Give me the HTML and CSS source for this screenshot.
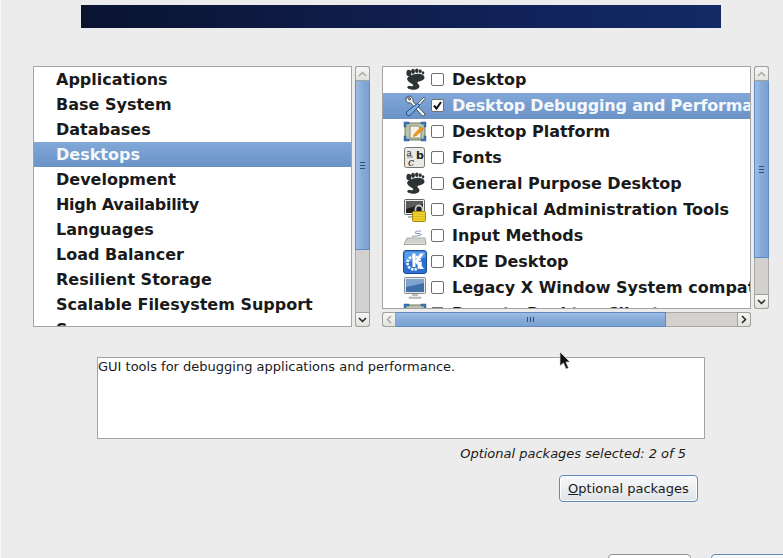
FILE: index.html
```html
<!DOCTYPE html>
<html lang="en">
<head>
<meta charset="utf-8">
<title>Package selection</title>
<link rel="stylesheet" href="styles.css">
</head>
<body>
<svg class="defs" width="0" height="0">
  <defs>
    <symbol id="foot" viewBox="0 0 24 24">
      <ellipse cx="5.800" cy="5" rx="2.400" ry="3.200" fill="#2e3436"/>
      <ellipse cx="10" cy="3.300" rx="2" ry="2.600" fill="#2e3436"/>
      <ellipse cx="13.800" cy="2.800" rx="1.700" ry="2.200" fill="#2e3436"/>
      <ellipse cx="17.200" cy="3.200" rx="1.500" ry="1.900" fill="#2e3436"/>
      <ellipse cx="20" cy="4.800" rx="1.300" ry="1.600" fill="#2e3436"/>
      <path d="M10 6.500c5-1.500 11.500-.5 11.500 3 0 3.500-6 3.500-7 4.800-.8 1.200 2 2 2 3.900 0 2.500-4 3.800-7 3.600-3-.2-6-1.500-5-3.200 1-1.400 5 .6 5.800-1.100.6-1.500-5-2.500-6-5.700C3.600 9.500 6 7.700 10 6.500z" fill="#2e3436"/>
    </symbol>
    <symbol id="frame" viewBox="0 0 24 24">
      <rect x="2" y="3" width="20" height="17" rx="2" fill="#b9c4a8" stroke="#6f7a66"/>
      <path d="M1 2h5v2H3v3H1zM18 2h5v5h-2V4h-3zM1 16h2v3h3v2H1zM21 16h2v5h-5v-2h3z" fill="#3f76b8" stroke="#2a5b94" stroke-width=".5"/>
    </symbol>
  </defs>
</svg>

<main class="window">
  <div class="banner"></div>

  <section class="choosers">
    <div class="group-pane">
      <ul class="list groups">
        <li class="group">Applications</li>
        <li class="group">Base System</li>
        <li class="group">Databases</li>
        <li class="group selected">Desktops</li>
        <li class="group">Development</li>
        <li class="group narrow">High Availability</li>
        <li class="group">Languages</li>
        <li class="group">Load Balancer</li>
        <li class="group">Resilient Storage</li>
        <li class="group">Scalable Filesystem Support</li>
        <li class="group">Server</li>
      </ul>
      <div class="vbar">
        <span class="step step-up"><svg width="9" height="6" viewBox="0 0 9 6"><path d="M1 5l3.500-3.500L8 5" fill="none" stroke="#a8a8a4" stroke-width="1.500"/></svg></span>
        <span class="thumb thumb-left"><i class="grip"></i></span>
        <span class="track"></span>
        <span class="step step-down"><svg width="9" height="6" viewBox="0 0 9 6"><path d="M1 1l3.500 3.500L8 1" fill="none" stroke="#222" stroke-width="1.500"/></svg></span>
      </div>
    </div>

    <div class="item-pane">
      <div class="item-main">
        <ul class="list items">
          <li class="item">
            <svg class="icon" width="24" height="24"><use href="#foot"/></svg>
            <span class="check"></span><span class="label">Desktop</span>
          </li>
          <li class="item selected">
            <svg class="icon" width="24" height="24" viewBox="0 0 24 24">
              <path d="M4 2.500C3 4 2.500 6 3.500 7.500c1 1.300 2.500 1.500 4 1.300L19 21.500c1 1 3 .5 3-1.500L10 7.500c.5-2-.3-4-2-5-1-.5-2-.5-2.500-.3L8 5 6.500 6.500z" fill="#f5f5f3" stroke="#3b4450" stroke-width=".9"/>
              <path d="M21 3l1.500 1.500-6 6.500-1.700-1.700z" fill="#e6e6e3" stroke="#3b4450" stroke-width=".8"/>
              <path d="M14.500 9.500l2 2L8 20.500c-1.300 1.300-3 1.500-4 .5s-.8-2.700.5-4z" fill="#7eaadb" stroke="#1f4f8a"/>
            </svg>
            <span class="check on"><svg width="11" height="11" viewBox="0 0 11 11"><path d="M2 5.500l2.500 3L9 2" fill="none" stroke="#111" stroke-width="2"/></svg></span><span class="label squeezed">Desktop Debugging and Performance</span>
          </li>
          <li class="item">
            <svg class="icon" width="24" height="24" viewBox="0 0 24 24">
              <use href="#frame" width="24" height="24"/>
              <path d="M7 6h8l3 3v9H7z" fill="#f4f1e1" stroke="#7a7a70" stroke-width=".8"/>
              <path d="M11 14.500l7-7.500 2.500 2-7 6.500-3 1z" fill="#f29a1a" stroke="#b96a08" stroke-width=".5"/>
            </svg>
            <span class="check"></span><span class="label">Desktop Platform</span>
          </li>
          <li class="item">
            <svg class="icon" width="24" height="24" viewBox="0 0 24 24">
              <rect x="1.500" y="1.500" width="20" height="20" rx="2" fill="#e9e9e6" stroke="#77776f"/>
              <text class="glyph" x="3.500" y="9.500" font-size="9">a</text>
              <text class="glyph glyph-bold" x="13" y="13" font-size="11">b</text>
              <text class="glyph glyph-italic" x="5" y="20" font-size="11">c</text>
              <path d="M4 11h6" stroke="#555" stroke-width=".8"/>
            </svg>
            <span class="check"></span><span class="label">Fonts</span>
          </li>
          <li class="item">
            <svg class="icon" width="24" height="24"><use href="#foot"/></svg>
            <span class="check"></span><span class="label">General Purpose Desktop</span>
          </li>
          <li class="item">
            <svg class="icon" width="24" height="24" viewBox="0 0 24 24">
              <rect x="1.500" y="1.500" width="20" height="15" rx="1" fill="#eee" stroke="#666"/>
              <rect x="3" y="3" width="17" height="12" fill="#1e1e1e"/>
              <path d="M3 3h17v3L3 11z" fill="#5a5a5a"/>
              <path d="M5 18h8v2H5z" fill="#bbb"/>
              <path d="M12.500 14v-3a3.500 3.500 0 0 1 7 0v3" fill="none" stroke="#c9c9c5" stroke-width="1.800"/>
              <rect x="9.500" y="13.500" width="13" height="10" rx="1" fill="#f0d12f" stroke="#a58a10"/>
              <path d="M10 16h12M10 18.500h12M10 21h12" stroke="#d3b41e" stroke-width=".8"/>
            </svg>
            <span class="check"></span><span class="label">Graphical Administration Tools</span>
          </li>
          <li class="item">
            <svg class="icon" width="24" height="24" viewBox="0 0 24 24">
              <path d="M4 14h18l1 6.500H1z" fill="#e0e0dc" stroke="#a5a5a0"/>
              <path d="M4 16h17M3 18h19" stroke="#b3b3ae" stroke-dasharray="1.500 .8"/>
              <path d="M9 12.500c3-.5 9-.5 9-2 0-1.500-6-.5-6-2 0-1 3-1.500 6-1.500" fill="none" stroke="#7d97b5"/>
            </svg>
            <span class="check"></span><span class="label">Input Methods</span>
          </li>
          <li class="item">
            <svg class="icon" width="24" height="24" viewBox="0 0 24 24">
              <rect x=".500" y=".500" width="23" height="23" rx="2.500" fill="#2a6fd2" stroke="#1b4a96"/>
              <path d="M1.500 1.500h21v6L1.500 13z" fill="#5a9be8"/>
              <circle cx="11" cy="13" r="6.500" fill="none" stroke="#fff" stroke-width="2.600" stroke-dasharray="2.400 1.100"/>
              <path d="M9.500 3.500h3v7l4.500-7h3.800L15.500 11l5.500 8h-3.800L12.500 12.500V17h-3z" fill="#fff"/>
            </svg>
            <span class="check"></span><span class="label">KDE Desktop</span>
          </li>
          <li class="item">
            <svg class="icon" width="24" height="24" viewBox="0 0 24 24">
              <rect x="1.500" y="1.500" width="21" height="16" rx="1" fill="#e8e8e8" stroke="#888"/>
              <rect x="3" y="3" width="18" height="13" fill="#3f6fa8"/>
              <path d="M3 3h18v4L3 11z" fill="#7fa4cf"/>
              <path d="M9 18h6v2H9z" fill="#bbb"/>
              <path d="M6 21h12v1.500H6z" fill="#ccc" stroke="#999" stroke-width=".5"/>
            </svg>
            <span class="check"></span><span class="label">Legacy X Window System compatibility</span>
          </li>
          <li class="item">
            <svg class="icon" width="24" height="24"><use href="#frame"/></svg>
            <span class="check"></span><span class="label">Remote Desktop Clients</span>
          </li>
        </ul>
        <div class="hbar">
          <span class="hstep hstep-left"><svg width="6" height="9" viewBox="0 0 6 9"><path d="M5 1L1.500 4.500 5 8" fill="none" stroke="#a8a8a4" stroke-width="1.500"/></svg></span>
          <span class="hthumb"><i class="hgrip"></i></span>
          <span class="htrack"></span>
          <span class="hstep hstep-right"><svg width="6" height="9" viewBox="0 0 6 9"><path d="M1 1l3.500 3.500L1 8" fill="none" stroke="#222" stroke-width="1.500"/></svg></span>
        </div>
      </div>
      <div class="vbar vbar-short">
        <span class="step step-up"><svg width="9" height="6" viewBox="0 0 9 6"><path d="M1 5l3.500-3.500L8 5" fill="none" stroke="#a8a8a4" stroke-width="1.500"/></svg></span>
        <span class="thumb thumb-right"><i class="grip"></i></span>
        <span class="track"></span>
        <span class="step step-down"><svg width="9" height="6" viewBox="0 0 9 6"><path d="M1 1l3.500 3.500L8 1" fill="none" stroke="#222" stroke-width="1.500"/></svg></span>
      </div>
    </div>
  </section>

  <section class="details">
    <p class="description">GUI tools for debugging applications and performance.</p>
    <p class="count">Optional packages selected: 2 of 5</p>
    <button class="btn optional" type="button"><u>O</u>ptional packages</button>
  </section>

  <footer class="actions">
    <button class="btn back" type="button"></button>
    <button class="btn next" type="button"></button>
  </footer>
</main>

<svg class="cursor" width="13" height="20" viewBox="0 0 13 20">
  <path d="M1 1v14l3.500-3 2.500 6 2.500-1-2.500-6H11z" fill="#111" stroke="#ddd" stroke-width=".7"/>
</svg>
</body>
</html>
```

FILE: styles.css
```css
html, body {
  margin: 0;
  padding: 0;
  height: 100%;
  overflow: hidden;
}

body {
  background: #edecec;
  font-family: "DejaVu Sans", sans-serif;
  color: #1a1a1a;
}

.defs {
  position: absolute;
}

.window {
  display: flex;
  flex-direction: column;
  height: 558px;
  overflow: hidden;
  border-left: 1px solid #f6f6f6;
  box-sizing: border-box;
}

.banner {
  flex: none;
  width: 640px;
  height: 23px;
  margin: 5px 0 0 80px;
  background: linear-gradient(90deg, #0a1330 0%, #0e1b45 35%, #11235a 70%, #132a66 100%);
}

.choosers {
  flex: none;
  display: flex;
  gap: 12px;
  height: 261px;
  margin: 38px 0 0 32px;
}

.group-pane {
  display: flex;
  gap: 3px;
}

.item-pane {
  display: flex;
  gap: 3px;
}

.item-main {
  display: flex;
  flex-direction: column;
  gap: 3px;
  width: 369px;
}

.list {
  margin: 0;
  padding: 0;
  list-style: none;
  background: #fff;
  border: 1px solid #a5a4a2;
  overflow: hidden;
  box-sizing: border-box;
  font-weight: 700;
  font-size: 16px;
}

.groups {
  width: 319px;
}

.items {
  height: 243px;
}

.group {
  height: 25px;
  line-height: 25px;
  padding-left: 22px;
  white-space: nowrap;
}

.narrow {
  letter-spacing: -0.3px;
}

.item {
  display: flex;
  align-items: center;
  height: 26px;
  white-space: nowrap;
}

.label {
  padding-bottom: 2px;
}

.squeezed {
  letter-spacing: -0.2px;
}

.selected {
  color: #f4f7fb;
  background: linear-gradient(180deg, #82a8d8 0%, #6a92c6 100%);
}

.icon {
  flex: none;
  margin-left: 20px;
}

.check {
  flex: none;
  display: flex;
  align-items: center;
  justify-content: center;
  box-sizing: border-box;
  width: 13px;
  height: 13px;
  margin: 0 8px 1px 4px;
  background: #fff;
  border: 1px solid #6f6f6c;
  border-radius: 2px;
}

.glyph {
  font-family: "DejaVu Serif", serif;
  font-weight: 400;
  fill: #222;
}

.glyph-bold {
  font-family: "DejaVu Sans", sans-serif;
  font-weight: 700;
}

.glyph-italic {
  font-style: italic;
}

.vbar {
  width: 15px;
  display: flex;
  flex-direction: column;
  background: #d2d1cf;
  border-radius: 3px;
  box-shadow: inset 0 0 0 1px #a9a8a5;
}

.vbar-short {
  height: 243px;
}

.step {
  flex: none;
  display: flex;
  align-items: center;
  justify-content: center;
  box-sizing: border-box;
  height: 15px;
  background: linear-gradient(180deg, #f7f7f6, #e2e2df);
  border: 1px solid #a0a09d;
}

.step-up {
  border-radius: 3px 3px 0 0;
}

.step-down {
  border-radius: 0 0 3px 3px;
}

.thumb {
  flex: none;
  display: flex;
  align-items: center;
  justify-content: center;
  box-sizing: border-box;
  background: linear-gradient(90deg, #9dbde3 0%, #86abd9 50%, #7ba1d1 100%);
  border: 1px solid #5f8bc2;
  border-width: 0 1px 1px;
}

.thumb-left {
  height: 169px;
}

.thumb-right {
  height: 177px;
}

.track {
  flex: 1;
}

.grip {
  display: block;
  width: 5px;
  height: 7px;
  background: repeating-linear-gradient(180deg, #2f4f78 0 1px, transparent 1px 3px);
}

.hbar {
  flex: none;
  display: flex;
  height: 15px;
  background: #d2d1cf;
  border-radius: 3px;
  box-shadow: inset 0 0 0 1px #a9a8a5;
}

.hstep {
  flex: none;
  display: flex;
  align-items: center;
  justify-content: center;
  box-sizing: border-box;
  width: 14px;
  background: linear-gradient(180deg, #f7f7f6, #e2e2df);
  border: 1px solid #a0a09d;
}

.hstep-left {
  border-radius: 3px 0 0 3px;
}

.hstep-right {
  border-radius: 0 3px 3px 0;
}

.hthumb {
  flex: none;
  display: flex;
  align-items: center;
  justify-content: center;
  box-sizing: border-box;
  width: 270px;
  background: linear-gradient(180deg, #9dbde3 0%, #86abd9 50%, #7ba1d1 100%);
  border: 1px solid #5f8bc2;
  border-left: 0;
}

.htrack {
  flex: 1;
}

.hgrip {
  display: block;
  width: 7px;
  height: 5px;
  background: repeating-linear-gradient(90deg, #2f4f78 0 1px, transparent 1px 3px);
}

.details {
  flex: none;
  display: flex;
  flex-direction: column;
  align-items: flex-end;
  width: 608px;
  margin: 30px 0 0 96px;
}

.description {
  box-sizing: border-box;
  width: 100%;
  height: 82px;
  margin: 0;
  padding: 0;
  background: #fff;
  border: 1px solid #a5a4a2;
  font-size: 13px;
  line-height: 17px;
}

.count {
  margin: 6px 19px 0 0;
  font-size: 13px;
  font-style: italic;
  line-height: 17px;
}

.btn {
  display: block;
  box-sizing: border-box;
  padding: 0;
  font-family: inherit;
  font-size: 13px;
  color: #1a1a1a;
  background: linear-gradient(180deg, #f8f9fa 0%, #dfe3e8 100%);
  border: 1px solid #5f88bb;
  border-radius: 4px;
  box-shadow: inset 0 0 0 1px #fff;
}

.optional {
  width: 139px;
  height: 27px;
  margin: 13px 7px 0 0;
}

.actions {
  flex: none;
  display: flex;
  gap: 20px;
  margin: 52px 0 0 607px;
}

.back {
  flex: none;
  width: 83px;
  height: 24px;
  border-color: #8f8f8c;
  background: #fff;
}

.next {
  flex: none;
  width: 83px;
  height: 24px;
}

.cursor {
  position: absolute;
  left: 559px;
  top: 351px;
}
```
